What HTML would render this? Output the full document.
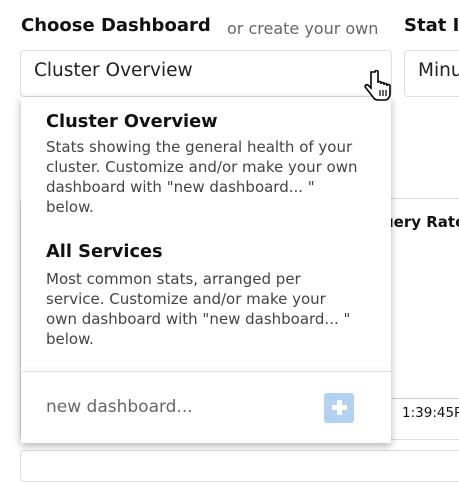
<!DOCTYPE html>
<html><head><meta charset="utf-8"><style>
body{margin:0;width:459px;height:468px;overflow:hidden;background:#fff;font-family:"DejaVu Sans","Liberation Sans",sans-serif;position:relative;color:#111}
.a{position:absolute;white-space:nowrap}
.d{font-size:15px;line-height:20px;color:#444}
</style></head><body>
<div class="a" style="left:21px;top:15px;font-size:18px;font-weight:bold;color:#111">Choose Dashboard</div>
<div class="a" style="left:227px;top:19px;font-size:16px;color:#666">or create your own</div>
<div class="a" style="left:404px;top:15px;font-size:18px;font-weight:bold">Stat In</div>
<div class="a" style="left:20px;top:50px;width:370px;height:45px;border:1px solid #ddd;border-radius:4px"></div>
<div class="a" style="left:34px;top:60px;font-size:18.5px;color:#222">Cluster Overview</div>
<div class="a" style="left:404px;top:50px;width:70px;height:45px;border:1px solid #ddd;border-radius:4px"></div>
<div class="a" style="left:418px;top:60px;font-size:18.5px;color:#222">Minu</div>
<div class="a" style="left:20px;top:198px;width:460px;height:240px;border:1px solid #ddd;border-radius:3px"></div>
<div class="a" style="left:383px;top:213px;font-size:15px;font-weight:bold">uery Rate</div>
<div class="a" style="left:392px;top:398px;width:80px;height:40px;border-top:1px solid #ccc"></div>
<div class="a" style="left:402px;top:405px;font-size:13.5px">1:39:45PM</div>
<div class="a" style="left:20px;top:450px;width:460px;height:30px;border:1px solid #ddd;border-radius:4px"></div>
<div class="a" style="left:21px;top:97px;width:370px;height:346px;background:#fff;box-shadow:0 3px 8px rgba(0,0,0,.3)"></div>
<div class="a" style="left:46px;top:111px;font-size:17.8px;font-weight:bold">Cluster Overview</div>
<div class="a d" style="left:46px;top:137px">Stats showing the general health of your<br>cluster. Customize and/or make your own<br>dashboard with "new dashboard... "<br>below.</div>
<div class="a" style="left:46px;top:241px;font-size:17.8px;font-weight:bold">All Services</div>
<div class="a d" style="left:46px;top:269px">Most common stats, arranged per<br>service. Customize and/or make your<br>own dashboard with "new dashboard... "<br>below.</div>
<div class="a" style="left:22px;top:371px;width:369px;height:1px;background:#ddd;box-shadow:0 -2px 4px rgba(0,0,0,.1)"></div>
<div class="a" style="left:46px;top:397px;font-size:17px;color:#666">new dashboard...</div>
<div class="a" style="left:324px;top:393px;width:30px;height:30px;background:#b3d1f0;border-radius:3px"></div>
<div class="a" style="left:332px;top:405px;width:15px;height:5px;background:#fff"></div>
<div class="a" style="left:337px;top:400px;width:5px;height:15px;background:#fff"></div>
<svg class="a" style="left:362px;top:70px" width="32" height="36" viewBox="0 0 32 36"><path d="M9 2v16l-3-3c-2-1-4 1-2 3l7 9c1 2 3 3 5 3h7c3 0 5-3 5-6v-8c0-2-3-2-3 0v-1c0-2-3-2-3 0v-1c0-2-3-2-3 0v-1c0-2-3-2-3 0V2c0-2-3-2-3 0z" fill="#fff" stroke="#000" stroke-width="1.6"/><path d="M18 20v6M21 20v6M24 20v6" stroke="#000" stroke-width="1.2"/></svg>
</body></html>
